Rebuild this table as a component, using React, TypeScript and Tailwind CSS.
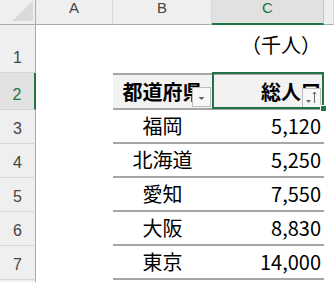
const rows = [
    { name: '福岡', value: '5,120' },
    { name: '北海道', value: '5,250' },
    { name: '愛知', value: '7,550' },
    { name: '大阪', value: '8,830' },
    { name: '東京', value: '14,000' },
];

const jp = "font-['Noto_Sans_CJK_JP',sans-serif]";
const ui = "font-['Liberation_Sans',Arial,sans-serif]";

const FilterButton = ({ sorted, className }: { sorted?: boolean; className: string }) => (
    <div className={`absolute w-[19px] h-[20px] bg-[#f7f7f7] border border-[#bdbdbd] z-10 ${className}`}>
        {sorted ? (
            <svg width="17" height="18" viewBox="0 0 17 18" className="absolute left-0 top-0">
                <path d="M3 11h5l-2.5 3z" fill="#666" />
                <path d="M11.5 14V3M9.8 5l1.7-2 1.7 2" fill="none" stroke="#666" strokeWidth="1" />
            </svg>
        ) : (
            <svg width="17" height="18" viewBox="0 0 17 18" className="absolute left-0 top-0">
                <path d="M5.5 9h6l-3 3z" fill="#666" />
            </svg>
        )}
    </div>
);

const ColHeader = ({ label, active }: { label: string; active?: boolean }) => (
    <div
        className={`flex justify-center text-[15px] leading-[15px] ${ui} ${
            active
                ? 'bg-[#e1e1e1] text-[#217346] border-b-2 border-[#217346] border-r border-r-[#c6c6c6]'
                : 'bg-[#efefef] text-[#444] border-b border-[#ababab] border-r border-r-[#d6d6d6]'
        }`}
    >
        {label}
    </div>
);

const RowHeader = ({ label, active }: { label: string; active?: boolean }) => (
    <div
        className={`flex items-end justify-center pb-[6px] text-[16px] leading-[16px] ${ui} border-b border-[#d6d6d6] ${
            active
                ? 'bg-[#e1e1e1] text-[#217346] border-r-2 border-r-[#217346]'
                : 'bg-[#efefef] text-[#444] border-r border-r-[#ababab]'
        }`}
    >
        {label}
    </div>
);

export default function App() {
    return (
        <div className="w-[334px] h-[282px] overflow-hidden bg-white">
            <div className="grid grid-cols-[36px_77px_99px_112px_1fr] grid-rows-[25px_48px_37px_34px_34px_34px_34px_34px_1fr] h-full">
                {/* corner */}
                <div className="relative bg-[#efefef] border-r border-b border-[#ababab]">
                    <svg width="36" height="25" className="absolute left-0 top-0">
                        <polygon points="33,1 33,21 12,21" fill="#d9d9d9" />
                    </svg>
                </div>
                <ColHeader label="A" />
                <ColHeader label="B" />
                <ColHeader label="C" active />
                <ColHeader label="" />

                {/* row 1 */}
                <RowHeader label="1" />
                <div />
                <div />
                <div className={`flex items-end justify-end pr-[3px] pb-[18px] text-[20px] leading-[20px] text-black ${jp}`}>
                    （千人）
                </div>
                <div />

                {/* row 2 - table header */}
                <RowHeader label="2" active />
                <div />
                <div className={`relative flex items-center justify-center bg-[#f2f2f2] border-y-2 border-[#a6a6a6] text-[20px] leading-[20px] font-bold text-black ${jp}`}>
                    <span className="whitespace-nowrap">都道府県</span>
                    <FilterButton className="right-[1px] bottom-[1px]" />
                </div>
                <div className={`relative flex items-center justify-end pr-[3px] bg-[#f2f2f2] border-y-2 border-[#a6a6a6] text-[20px] leading-[20px] font-bold text-black ${jp}`}>
                    <span className="whitespace-nowrap">総人口</span>
                    <FilterButton sorted className="right-[3px] bottom-0" />
                    <div className="absolute left-0 right-0 -top-[3px] -bottom-[1px] border-2 border-[#217346] z-20" />
                    <div className="absolute -right-[3px] -bottom-[4px] w-[7px] h-[7px] bg-[#217346] border border-white z-30" />
                </div>
                <div />

                {/* data rows */}
                {rows.map((row, index) => (
                    <div key={index} className="contents">
                        <RowHeader label={String(index + 3)} />
                        <div />
                        <div className={`flex items-center justify-center border-b-2 border-[#a6a6a6] text-[20px] leading-[20px] text-black ${jp}`}>
                            {row.name}
                        </div>
                        <div className={`flex items-center justify-end pr-[3px] border-b-2 border-[#a6a6a6] text-[20px] leading-[20px] text-black ${jp}`}>
                            {row.value}
                        </div>
                        <div />
                    </div>
                ))}

                {/* row 8, cut off */}
                <div className="bg-[#efefef] border-r border-[#ababab]" />
                <div />
                <div />
                <div />
                <div />
            </div>
        </div>
    );
}
